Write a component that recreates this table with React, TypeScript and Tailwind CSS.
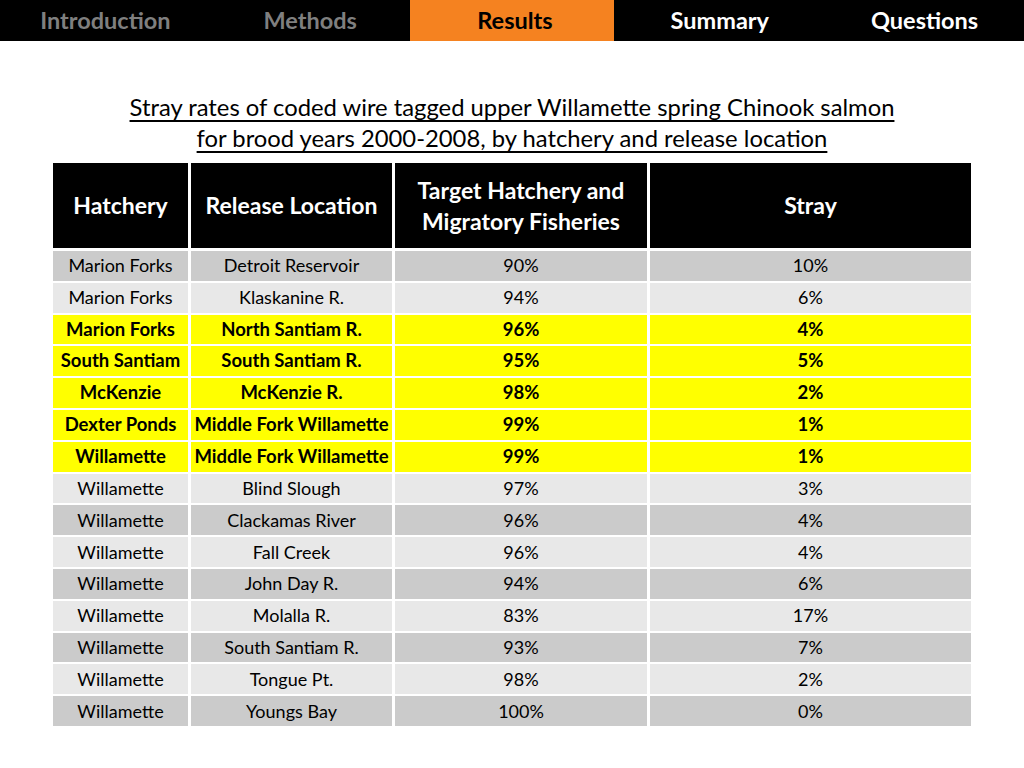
import React from "react";

type Row = { h: string; r: string; t: string; s: string; y?: boolean };

const rows: Row[] = [
  { h: "Marion Forks", r: "Detroit Reservoir", t: "90%", s: "10%" },
  { h: "Marion Forks", r: "Klaskanine R.", t: "94%", s: "6%" },
  { h: "Marion Forks", r: "North Santiam R.", t: "96%", s: "4%", y: true },
  { h: "South Santiam", r: "South Santiam R.", t: "95%", s: "5%", y: true },
  { h: "McKenzie", r: "McKenzie R.", t: "98%", s: "2%", y: true },
  { h: "Dexter Ponds", r: "Middle Fork Willamette", t: "99%", s: "1%", y: true },
  { h: "Willamette", r: "Middle Fork Willamette", t: "99%", s: "1%", y: true },
  { h: "Willamette", r: "Blind Slough", t: "97%", s: "3%" },
  { h: "Willamette", r: "Clackamas River", t: "96%", s: "4%" },
  { h: "Willamette", r: "Fall Creek", t: "96%", s: "4%" },
  { h: "Willamette", r: "John Day R.", t: "94%", s: "6%" },
  { h: "Willamette", r: "Molalla R.", t: "83%", s: "17%" },
  { h: "Willamette", r: "South Santiam R.", t: "93%", s: "7%" },
  { h: "Willamette", r: "Tongue Pt.", t: "98%", s: "2%" },
  { h: "Willamette", r: "Youngs Bay", t: "100%", s: "0%" },
];

const tabs = [
  { label: "Introduction", cls: "bg-black text-[#7f7f7f]" },
  { label: "Methods", cls: "bg-black text-[#7f7f7f]" },
  { label: "Results", cls: "bg-[#f58220] text-black" },
  { label: "Summary", cls: "bg-black text-white" },
  { label: "Questions", cls: "bg-black text-white" },
];

const headers: string[][] = [
  ["Hatchery"],
  ["Release Location"],
  ["Target Hatchery and", "Migratory Fisheries"],
  ["Stray"],
];

export default function App() {
  return (
    <div
      className="w-[1024px] h-[768px] bg-white overflow-hidden"
      style={{ fontFamily: "Lato, 'Open Sans', sans-serif" }}
    >
      <div className="grid grid-cols-5 h-[41px] bg-black">
        {tabs.map((t) => (
          <div
            key={t.label}
            className={`flex items-center justify-center pl-[6px] text-[23.5px] font-bold ${t.cls}`}
          >
            {t.label}
          </div>
        ))}
      </div>

      <div className="flex flex-col items-center pt-[51px]">
        <div className="text-center text-[23.8px] leading-[31px] text-black underline underline-offset-[4px] decoration-[1.5px]">
          <div>Stray rates of coded wire tagged upper Willamette spring Chinook salmon</div>
          <div>for brood years 2000-2008, by hatchery and release location</div>
        </div>
      </div>

      <div className="ml-[53px] mt-[9px] grid grid-cols-[135px_201px_252px_321px] gap-x-[3px] gap-y-[2px] w-[918px]">
        {headers.map((h) => (
          <div
            key={h[0]}
            className="bg-black text-white font-bold text-[23px] leading-[31px] flex flex-col items-center justify-center text-center h-[85px] mb-[1px] whitespace-nowrap"
          >
            {h.map((line) => (
              <div key={line}>{line}</div>
            ))}
          </div>
        ))}
        {rows.map((row, i) => {
          const bg = row.y
            ? "bg-[#ffff00] font-bold text-[18.5px]"
            : i % 2 === 0
            ? "bg-[#cbcbcb] text-[18px]"
            : "bg-[#e8e8e8] text-[18px]";
          return [row.h, row.r, row.t, row.s].map((c, j) => (
            <div
              key={`${i}-${j}`}
              className={`${bg} h-[29.8px] flex items-center justify-center text-black whitespace-nowrap`}
            >
              {c}
            </div>
          ));
        })}
      </div>
    </div>
  );
}
